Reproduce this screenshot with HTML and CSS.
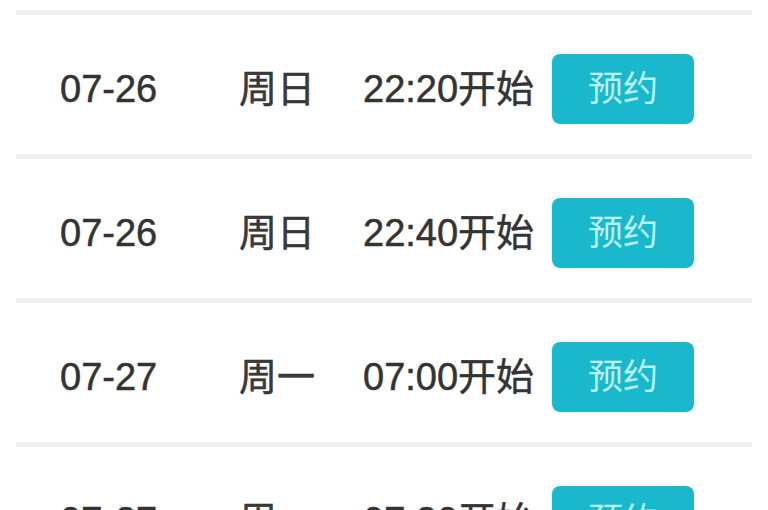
FILE: index.html
```html
<!DOCTYPE html>
<html lang="zh">
<head>
<meta charset="utf-8">
<link rel="stylesheet" href="styles.css">
<title>预约</title>
</head>
<body>
<div class="list">
  <div class="item">
    <div class="sep"></div>
    <div class="row">
      <span class="date">07-26</span>
      <span class="week">周日</span>
      <span class="time">22:20开始</span>
      <span class="btn">预约</span>
    </div>
  </div>
  <div class="item">
    <div class="sep"></div>
    <div class="row">
      <span class="date">07-26</span>
      <span class="week">周日</span>
      <span class="time">22:40开始</span>
      <span class="btn">预约</span>
    </div>
  </div>
  <div class="item">
    <div class="sep"></div>
    <div class="row">
      <span class="date">07-27</span>
      <span class="week">周一</span>
      <span class="time">07:00开始</span>
      <span class="btn">预约</span>
    </div>
  </div>
  <div class="item">
    <div class="sep"></div>
    <div class="row">
      <span class="date">07-27</span>
      <span class="week">周一</span>
      <span class="time">07:20开始</span>
      <span class="btn">预约</span>
    </div>
  </div>
</div>
</body>
</html>
```
FILE: styles.css
```css
html, body {
  margin: 0;
  padding: 0;
  background: #ffffff;
  overflow: hidden;
}
body {
  width: 768px;
  height: 510px;
  font-family: "Liberation Sans", "Noto Sans CJK SC", sans-serif;
  color: #333333;
}
.list {
  padding-top: 10px;
}
.sep {
  height: 5px;
  margin: 0 16px;
  background: #f0f0f0;
}
.row {
  height: 131px;
  padding-top: 8px;
  padding-left: 60px;
  display: grid;
  grid-template-columns: 179px 124px 189px 142px;
  align-items: center;
  font-size: 38px;
  line-height: 1;
}
.date, .week, .time {
  white-space: nowrap;
  -webkit-text-stroke: 0.5px #333333;
}
.week {
  color: #3a3a3a;
}
.btn {
  width: 142px;
  height: 70px;
  border-radius: 8px;
  background: #19b8cc;
  color: #b9f1f8;
  font-size: 35px;
  display: flex;
  align-items: center;
  justify-content: center;
}
```
